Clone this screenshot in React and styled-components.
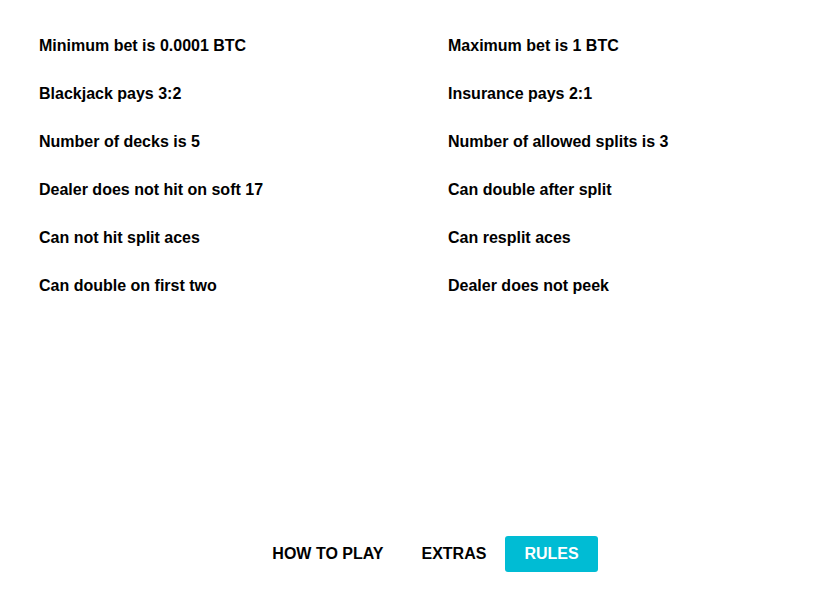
import React, { useState } from 'react';
import styled, { createGlobalStyle } from 'styled-components';

const GlobalStyle = createGlobalStyle`
  html, body {
    margin: 0;
    padding: 0;
    background: #ffffff;
    font-family: "Liberation Sans", Arial, sans-serif;
  }
`;

const rules = [
  ['Minimum bet is 0.0001 BTC', 'Maximum bet is 1 BTC'],
  ['Blackjack pays 3:2', 'Insurance pays 2:1'],
  ['Number of decks is 5', 'Number of allowed splits is 3'],
  ['Dealer does not hit on soft 17', 'Can double after split'],
  ['Can not hit split aces', 'Can resplit aces'],
  ['Can double on first two', 'Dealer does not peek'],
];

const tabs = ['HOW TO PLAY', 'EXTRAS', 'RULES'];

function App() {
  const [active, setActive] = useState('RULES');

  return (
    <>
      <GlobalStyle />
      <Page>
        <RulesGrid>
          {rules.flat().map((r) => (
            <Rule key={r}>{r}</Rule>
          ))}
        </RulesGrid>
        <Tabs>
          {tabs.map((t) => (
            <Tab key={t} $active={t === active} onClick={() => setActive(t)}>
              {t}
            </Tab>
          ))}
        </Tabs>
      </Page>
    </>
  );
}

const Page = styled.div`
  width: 838px;
  height: 593px;
  box-sizing: border-box;
  padding: 22px 0 21px 39px;
  display: flex;
  flex-direction: column;
  justify-content: space-between;
`;

const RulesGrid = styled.div`
  display: grid;
  grid-template-columns: 409px 1fr;
`;

const Rule = styled.div`
  height: 48px;
  line-height: 48px;
  font-size: 16px;
  font-weight: 700;
  color: #000;
`;

const Tabs = styled.div`
  display: flex;
  justify-content: center;
  margin-left: -26px;
`;

const Tab = styled.button`
  height: 36px;
  padding: 0 19px;
  border: none;
  border-radius: 3px;
  font-family: "Liberation Sans", Arial, sans-serif;
  font-size: 16px;
  font-weight: 700;
  cursor: pointer;
  color: ${(p) => (p.$active ? '#ffffff' : '#000000')};
  background: ${(p) => (p.$active ? '#00bcd4' : 'transparent')};
`;

export default App;
